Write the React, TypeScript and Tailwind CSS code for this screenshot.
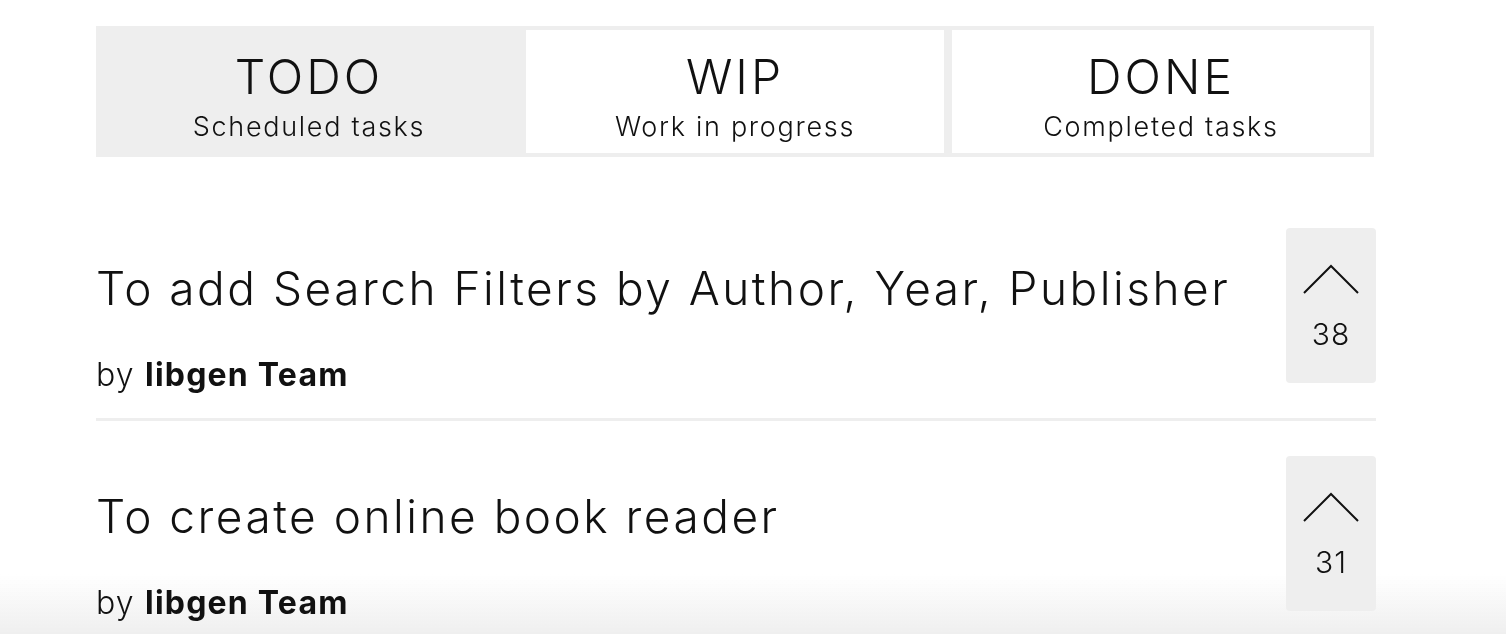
const tabs = [
    { title: "TODO", subtitle: "Scheduled tasks", active: true },
    { title: "WIP", subtitle: "Work in progress", active: false },
    { title: "DONE", subtitle: "Completed tasks", active: false },
];

const tasks = [
    { title: "To add Search Filters by Author, Year, Publisher", author: "libgen Team", votes: 38 },
    { title: "To create online book reader", author: "libgen Team", votes: 31 },
];

const font = "font-['Inter','Liberation_Sans',sans-serif]";

const UpvoteBox = ({ votes }: { votes: number }) => (
    <button className="flex h-[155px] w-[90px] shrink-0 flex-col items-center rounded-[4px] bg-[#eeeeee] pt-[36px]">
        <svg width="56" height="30" viewBox="0 0 56 30" fill="none">
            <polyline points="1,29 28,2 55,29" stroke="#111" strokeWidth="2" />
        </svg>
        <span className="mt-[22px] text-[30px] font-light leading-[36px] tracking-[1px] text-[#111]">{votes}</span>
    </button>
);

export default function App() {
    return (
        <div className={`min-h-[634px] bg-white text-[#111] ${font}`}>
            {/* soft fade at the bottom of the viewport, sits behind the list */}
            <div className="pointer-events-none fixed inset-x-0 bottom-0 z-0 h-[60px] bg-linear-to-b from-white/0 to-[#efefef]" />

            <div className="relative z-10 pl-[96px] pt-[26px]">
                <div className="grid w-[1278px] grid-cols-3 gap-[8px] bg-[#eeeeee] p-[4px]">
                    {tabs.map((tab) => (
                        <div
                            key={tab.title}
                            className={`flex h-[123px] flex-col items-center pt-[19px] ${tab.active ? "bg-[#eeeeee]" : "bg-white"}`}
                        >
                            <span className="text-[48px] font-light leading-[56px] tracking-[3px]">{tab.title}</span>
                            <span className="mt-[5px] text-[27px] font-light leading-[34px] tracking-[1.7px]">{tab.subtitle}</span>
                        </div>
                    ))}
                </div>

                <div className="mt-[36px] w-[1280px]">
                    {tasks.map((task) => (
                        <div key={task.title} className="flex items-start justify-between border-b-[3px] border-[#eeeeee] py-[35px]">
                            <div className="pt-[33px]">
                                <h3 className="text-[46px] font-light leading-[54px] tracking-[2.5px]">{task.title}</h3>
                                <p className="mt-[52px] text-[32px] font-light leading-[16px] tracking-[1.2px]">
                                    by <span className="font-bold">{task.author}</span>
                                </p>
                            </div>
                            <UpvoteBox votes={task.votes} />
                        </div>
                    ))}
                </div>
            </div>
        </div>
    );
}
